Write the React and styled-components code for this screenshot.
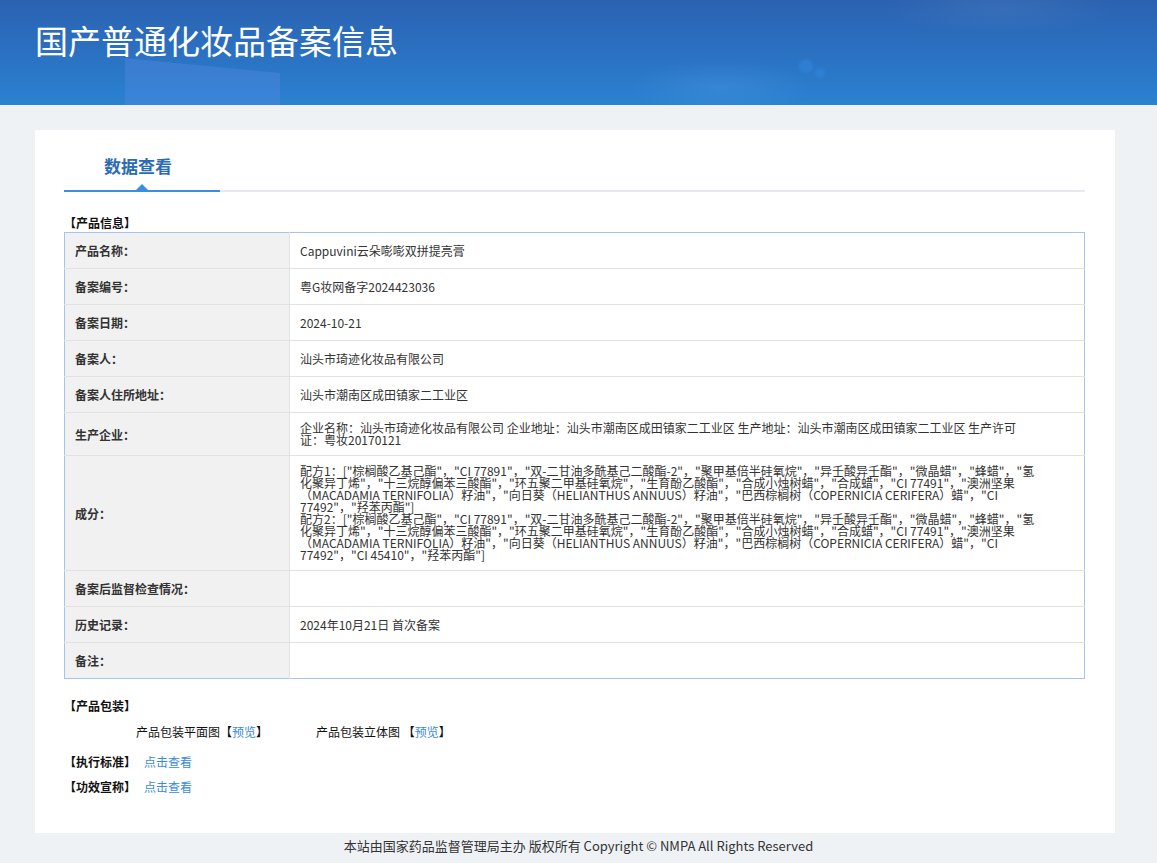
import React from 'react';
import styled, { createGlobalStyle } from 'styled-components';

const GlobalStyle = createGlobalStyle`
  html, body {
    margin: 0;
    padding: 0;
    background: #eff2f5;
    font-family: "Noto Sans CJK SC", "Noto Sans", "Liberation Sans", sans-serif;
    color: #333;
  }
`;

const Banner = styled.div`
  position: relative;
  height: 105px;
  overflow: hidden;
  background:
    radial-gradient(ellipse 170px 40px at 1000px 8px, rgba(255, 255, 255, 0.06), transparent 70%),
    radial-gradient(ellipse 130px 40px at 720px 88px, rgba(80, 150, 230, 0.35), transparent 70%),
    linear-gradient(180deg, #2b62b1 0%, #2b6fc0 45%, #2a82d1 100%);
`;

const BannerShape = styled.div`
  position: absolute;
  left: 125px;
  top: 58px;
  width: 155px;
  height: 60px;
  background: rgba(90, 140, 230, 0.35);
  clip-path: polygon(0 0, 100% 25%, 100% 100%, 0 100%);
`;

const Dot = styled.div`
  position: absolute;
  left: ${(p) => p.x}px;
  top: ${(p) => p.y}px;
  width: ${(p) => p.size}px;
  height: ${(p) => p.size}px;
  border-radius: 50%;
  background: rgba(50, 135, 220, 0.55);
  filter: blur(1px);
`;

const BannerTitle = styled.h1`
  position: relative;
  margin: 0;
  padding: 19px 0 0 35px;
  font-size: 33px;
  font-weight: 400;
  line-height: 42px;
  color: #fff;
`;

const Card = styled.div`
  margin: 25px 42px 0 35px;
  background: #fff;
  padding: 20px 30px 38px 29px;
`;

const TabBar = styled.div`
  display: flex;
  border-bottom: 2px solid #e6e9ee;
`;

const Tab = styled.div`
  position: relative;
  width: 148px;
  padding-right: 8px;
  height: 40px;
  line-height: 32px;
  text-align: center;
  font-size: 17px;
  font-weight: 700;
  color: #2a6bb2;
  margin-bottom: -2px;
  border-bottom: 2px solid #3a8fe0;

  &::after {
    content: '';
    position: absolute;
    left: 78px;
    bottom: 0;
    transform: translateX(-50%);
    border-left: 6px solid transparent;
    border-right: 6px solid transparent;
    border-bottom: 6px solid #3a8fe0;
  }
`;

const SectionTitle = styled.div`
  font-size: 12px;
  font-weight: 700;
  color: #111;
  line-height: 14px;
  margin: ${(p) => p.margin || '0'};
`;

const Table = styled.table`
  width: 100%;
  border-collapse: collapse;
  border: 1px solid #a6c4ea;
  font-size: 12px;
`;

const Row = styled.tr`
  border-bottom: 1px solid #e2e2e2;
  &:last-child {
    border-bottom: none;
  }
`;

const Label = styled.td`
  width: 204px;
  background: #f1f1f1;
  padding: 0 10px;
  height: 35px;
  font-weight: 700;
  color: #333;
  border-right: 1px solid #e2e2e2;
`;

const Value = styled.td`
  padding: 9px ${(p) => (p.narrow ? 56 : 42)}px 9px 10px;
  height: 17px;
  color: #333;
  line-height: ${(p) => (p.tight ? '12px' : '17px')};
`;

const Line = styled.div``;

const PackRow = styled.div`
  display: flex;
  font-size: 12px;
  line-height: 16px;
  color: #111;
  padding-left: 72px;
  margin-top: 11px;
`;

const PackItem = styled.span`
  width: ${(p) => p.w}px;
`;

const Link = styled.a`
  color: #3a8ad8;
  text-decoration: none;
`;

const InfoRow = styled.div`
  display: flex;
  align-items: center;
  font-size: 12px;
  line-height: 16px;
  margin-top: ${(p) => p.mt}px;
  gap: 8px;
`;

const InfoTitle = styled.span`
  font-weight: 700;
  color: #111;
`;

const Footer = styled.div`
  text-align: center;
  font-size: 13px;
  line-height: 26px;
  color: #333;
`;

const rows = [
  ['产品名称：', 'Cappuvini云朵嘭嘭双拼提亮膏'],
  ['备案编号：', '粤G妆网备字2024423036'],
  ['备案日期：', '2024-10-21'],
  ['备案人：', '汕头市琦迹化妆品有限公司'],
  ['备案人住所地址：', '汕头市潮南区成田镇家二工业区'],
];

const formula1 =
  '配方1：["棕榈酸乙基己酯"，"CI 77891"，"双-二甘油多酰基己二酸酯-2"，"聚甲基倍半硅氧烷"，"异壬酸异壬酯"，"微晶蜡"，"蜂蜡"，"氢化聚异丁烯"，"十三烷醇偏苯三酸酯"，"环五聚二甲基硅氧烷"，"生育酚乙酸酯"，"合成小烛树蜡"，"合成蜡"，"CI 77491"，"澳洲坚果（MACADAMIA TERNIFOLIA）籽油"，"向日葵（HELIANTHUS ANNUUS）籽油"，"巴西棕榈树（COPERNICIA CERIFERA）蜡"，"CI 77492"，"羟苯丙酯"]';
const formula2 =
  '配方2：["棕榈酸乙基己酯"，"CI 77891"，"双-二甘油多酰基己二酸酯-2"，"聚甲基倍半硅氧烷"，"异壬酸异壬酯"，"微晶蜡"，"蜂蜡"，"氢化聚异丁烯"，"十三烷醇偏苯三酸酯"，"环五聚二甲基硅氧烷"，"生育酚乙酸酯"，"合成小烛树蜡"，"合成蜡"，"CI 77491"，"澳洲坚果（MACADAMIA TERNIFOLIA）籽油"，"向日葵（HELIANTHUS ANNUUS）籽油"，"巴西棕榈树（COPERNICIA CERIFERA）蜡"，"CI 77492"，"CI 45410"，"羟苯丙酯"]';

export default function App() {
  return (
    <>
      <GlobalStyle />
      <Banner>
        <BannerShape />
        <Dot x={799} y={59} size={14} />
        <Dot x={815} y={68} size={10} />
        <BannerTitle>国产普通化妆品备案信息</BannerTitle>
      </Banner>

      <Card>
        <TabBar>
          <Tab>数据查看</Tab>
        </TabBar>

        <SectionTitle margin="24px 0 2px">【产品信息】</SectionTitle>
        <Table>
          <tbody>
            {rows.map(([k, v]) => (
              <Row key={k}>
                <Label>{k}</Label>
                <Value>{v}</Value>
              </Row>
            ))}
            <Row>
              <Label>生产企业：</Label>
              <Value tight narrow>
                企业名称：汕头市琦迹化妆品有限公司 企业地址：汕头市潮南区成田镇家二工业区 生产地址：汕头市潮南区成田镇家二工业区 生产许可证：粤妆20170121
              </Value>
            </Row>
            <Row>
              <Label>成分：</Label>
              <Value tight>
                <Line>{formula1}</Line>
                <Line>{formula2}</Line>
              </Value>
            </Row>
            <Row>
              <Label>备案后监督检查情况：</Label>
              <Value />
            </Row>
            <Row>
              <Label>历史记录：</Label>
              <Value>2024年10月21日 首次备案</Value>
            </Row>
            <Row>
              <Label>备注：</Label>
              <Value />
            </Row>
          </tbody>
        </Table>

        <SectionTitle margin="20px 0 0">【产品包装】</SectionTitle>
        <PackRow>
          <PackItem w={180}>
            产品包装平面图【<Link href="#">预览</Link>】
          </PackItem>
          <PackItem w={160}>
            产品包装立体图 【<Link href="#">预览</Link>】
          </PackItem>
        </PackRow>
        <InfoRow mt={14}>
          <InfoTitle>【执行标准】</InfoTitle>
          <Link href="#">点击查看</Link>
        </InfoRow>
        <InfoRow mt={9}>
          <InfoTitle>【功效宣称】</InfoTitle>
          <Link href="#">点击查看</Link>
        </InfoRow>
      </Card>

      <Footer>本站由国家药品监督管理局主办 版权所有 Copyright © NMPA All Rights Reserved</Footer>
    </>
  );
}
